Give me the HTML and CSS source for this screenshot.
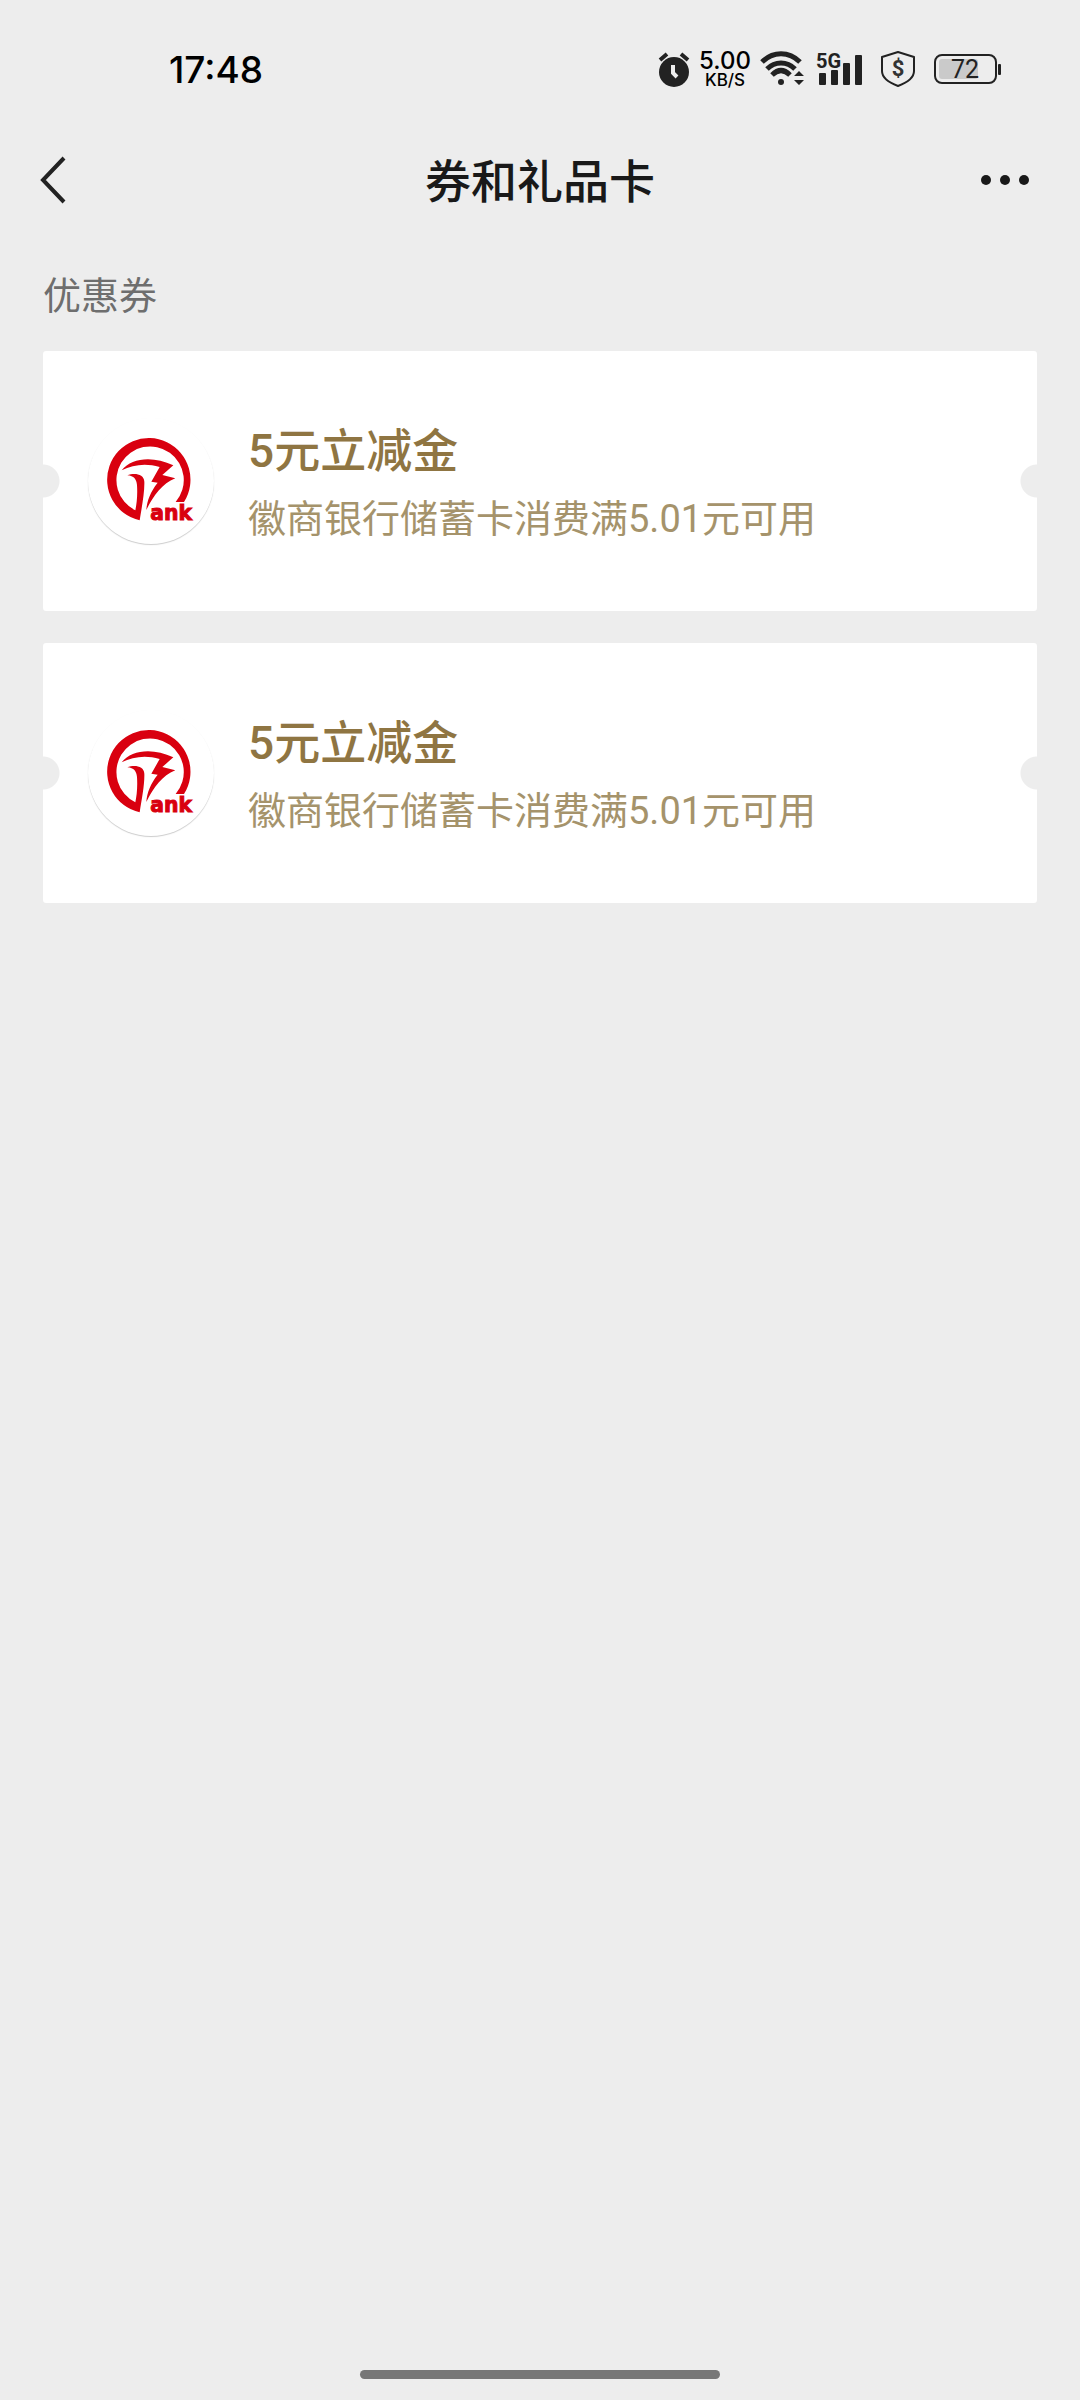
FILE: index.html
```html
<!doctype html>
<html lang="zh-CN">
  <head>
    <meta charset="utf-8">
    <meta name="viewport" content="width=device-width, initial-scale=1">
    <title>券和礼品卡</title>
    <link rel="stylesheet" href="styles.css">
  </head>
  <body>
    <div class="status-bar">
      <span class="time">17:48</span>
      <div class="status-icons">
        <svg width="32" height="36" viewBox="0 0 32 36" fill="none">
          <circle cx="16" cy="21" r="15" fill="#222" />
          <path d="M2 9 L9 3 M23 3 L30 9" stroke="#222" stroke-width="4" />
          <path d="M15 14 V22 L19 26" stroke="#ededed" stroke-width="4" />
        </svg>
        <div class="speed">
          <span class="speed-value">5.00</span>
          <span class="speed-unit">KB/S</span>
        </div>
        <svg class="wifi" width="46" height="36" viewBox="0 0 46 36" fill="none">
          <path d="M2 11 C13 0 29 0 40 11" stroke="#222" stroke-width="5" />
          <path d="M7 18 C15 10 27 10 35 18" stroke="#222" stroke-width="5" />
          <path d="M12 24 C18 18 24 18 30 24" stroke="#222" stroke-width="5" />
          <circle cx="21" cy="31" r="3" fill="#222" />
          <path d="M34 25 L39 20 L44 25 Z M34 29 L39 34 L44 29 Z" fill="#222" />
        </svg>
        <svg class="signal" width="48" height="40" viewBox="0 -2 48 40">
          <rect x="3" y="22" width="7" height="12" rx="1" fill="#222" />
          <rect x="15" y="19" width="7" height="15" rx="1" fill="#222" />
          <rect x="27" y="12" width="7" height="22" rx="1" fill="#222" />
          <rect x="39" y="4" width="7" height="30" rx="1" fill="#222" />
          <text class="network" x="0" y="17">5G</text>
        </svg>
        <svg class="shield" width="36" height="38" viewBox="0 0 36 38">
          <path d="M18 2 L34 7 V21 C34 28 26 33 18 36 C10 33 2 28 2 21 V7 Z" fill="none" stroke="#222" stroke-width="2" stroke-linejoin="round" />
          <text class="dollar" x="18" y="26" text-anchor="middle">$</text>
        </svg>
        <svg class="battery" width="68" height="32" viewBox="0 0 68 32">
          <rect x="1" y="2" width="61" height="28" rx="7" fill="none" stroke="#222" stroke-width="2" />
          <rect x="5" y="6" width="39" height="20" rx="3" fill="#cacaca" />
          <rect x="64" y="11" width="3" height="11" rx="1" fill="#222" />
          <text class="level" x="31" y="25" text-anchor="middle">72</text>
        </svg>
      </div>
    </div>

    <header class="nav">
      <button class="nav-button" type="button" aria-label="返回">
        <svg width="28" height="48" viewBox="0 0 28 48" fill="none">
          <path d="M25 2 L4 24 L25 46" stroke="#222" stroke-width="4" />
        </svg>
      </button>
      <h1>券和礼品卡</h1>
      <button class="nav-button" type="button" aria-label="更多">
        <svg width="50" height="12" viewBox="0 0 50 12" fill="#191919">
          <circle cx="5" cy="6" r="5" />
          <circle cx="24" cy="6" r="5" />
          <circle cx="43" cy="6" r="5" />
        </svg>
      </button>
    </header>

    <main>
      <h2>优惠券</h2>
      <ul class="coupons">
        <li>
          <a class="coupon" href="#">
            <svg class="logo" viewBox="27 -9 378 378">
              <path d="M290 243 L315 243 A125 125 0 1 0 182 298 C189 255 197 215 196 182 C195 158 165 155 145 163 C165 165 172 174 174 192 C176 225 173 248 169 268 A101 101 0 1 1 290 243 Z" />
              <path d="M128 148 C158 110 222 104 283 133 L250 162 L289 172 C250 188 224 222 202 267 C204 238 215 212 236 185 L217 182 L242 138 C200 125 162 131 128 148 Z" />
              <text class="logo-text" x="214" y="298">ank</text>
            </svg>
            <div class="info">
              <h3>5元立减金</h3>
              <p>徽商银行储蓄卡消费满5.01元可用</p>
            </div>
          </a>
        </li>
        <li>
          <a class="coupon" href="#">
            <svg class="logo" viewBox="27 -9 378 378">
              <path d="M290 243 L315 243 A125 125 0 1 0 182 298 C189 255 197 215 196 182 C195 158 165 155 145 163 C165 165 172 174 174 192 C176 225 173 248 169 268 A101 101 0 1 1 290 243 Z" />
              <path d="M128 148 C158 110 222 104 283 133 L250 162 L289 172 C250 188 224 222 202 267 C204 238 215 212 236 185 L217 182 L242 138 C200 125 162 131 128 148 Z" />
              <text class="logo-text" x="214" y="298">ank</text>
            </svg>
            <div class="info">
              <h3>5元立减金</h3>
              <p>徽商银行储蓄卡消费满5.01元可用</p>
            </div>
          </a>
        </li>
      </ul>
    </main>

    <div class="home-bar"></div>
  </body>
</html>
```
FILE: styles.css
```css
* {
  box-sizing: border-box;
  margin: 0;
  padding: 0;
}

body {
  display: flex;
  flex-direction: column;
  min-height: 100vh;
  background: #ededed;
  font-family: Roboto, "Noto Sans CJK SC", sans-serif;
}

/* Status bar */
.status-bar {
  display: flex;
  align-items: center;
  justify-content: space-between;
  height: 138px;
  padding: 0 78px 0 169px;
  color: #000;
  font-family: Inter, sans-serif;
}

.time {
  font-size: 37px;
  font-weight: 500;
}

.status-icons {
  display: flex;
  align-items: center;
}

.speed {
  display: flex;
  flex-direction: column;
  align-items: center;
  width: 60px;
  margin: 0 5px;
}

.speed-value {
  font-size: 24px;
  font-weight: 500;
  line-height: 22px;
}

.speed-unit {
  font-size: 17px;
  font-weight: 500;
  line-height: 17px;
}

.signal {
  margin-left: 10px;
}

.shield {
  margin: 0 18px 0 16px;
}

.network {
  font: 700 20px Roboto, sans-serif;
  fill: #222;
}

.dollar {
  font: 700 22px Roboto, sans-serif;
  fill: #333;
}

.level {
  font: 400 25px Roboto, sans-serif;
  fill: #222;
}

/* Title bar */
.nav {
  display: flex;
  align-items: center;
  justify-content: space-between;
  height: 84px;
  padding: 0 39px;
}

.nav h1 {
  padding-top: 4px;
  color: #191919;
  font-size: 46px;
  font-weight: 500;
  line-height: 68px;
}

.nav-button {
  display: flex;
  align-items: center;
  width: 60px;
  height: 84px;
  border: none;
  background: none;
}

/* Coupons */
main {
  flex: 1;
  padding: 46px 43px;
}

h2 {
  margin-bottom: 27px;
  color: #6e6e6e;
  font-size: 38px;
  font-weight: 400;
  line-height: 56px;
}

.coupons {
  display: flex;
  flex-direction: column;
  gap: 32px;
  list-style: none;
}

.coupon {
  display: flex;
  align-items: center;
  gap: 34px;
  height: 260px;
  padding: 0 45px;
  border-radius: 3px;
  /* half circles cut into both sides */
  background:
    radial-gradient(circle at 0 50%, #ededed 16px, transparent 17px),
    radial-gradient(circle at 100% 50%, #ededed 16px, transparent 17px),
    #fff;
  text-decoration: none;
}

.logo {
  flex: none;
  width: 126px;
  height: 126px;
  border-radius: 50%;
  box-shadow: 0 1px 1px #ccc;
  fill: #d9000f;
}

.logo-text {
  font: bold 61px "DejaVu Sans", sans-serif;
  stroke: #d9000f;
  stroke-width: 3;
}

.info {
  padding-top: 8px;
}

.info h3 {
  color: #8f7542;
  font-size: 46px;
  font-weight: 500;
  line-height: 68px;
}

.info p {
  color: #a5936b;
  font-size: 38px;
  line-height: 68px;
}

.home-bar {
  width: 33.3%;
  height: 9px;
  margin: 0 auto 21px;
  border-radius: 5px;
  background: #777;
}
```
